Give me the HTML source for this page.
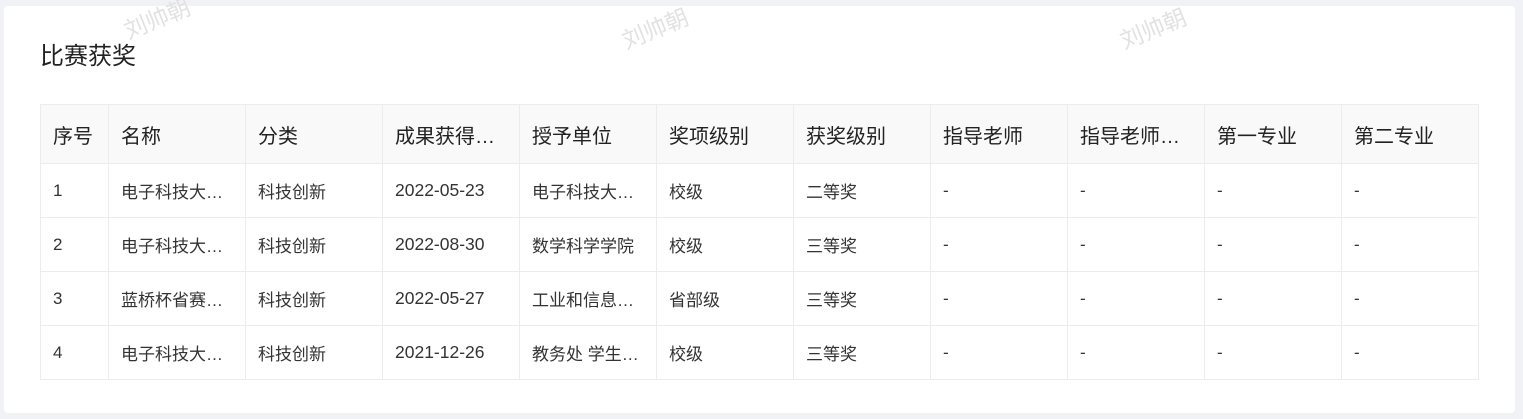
<!DOCTYPE html>
<html><head><meta charset="utf-8"><style>
body{margin:0;background:#f0f2f5;font-family:"Liberation Sans","Noto Sans CJK SC",sans-serif;width:1523px;height:419px;overflow:hidden;position:relative}
.card{position:absolute;left:4px;top:6px;width:1511px;height:407px;background:#fff;border-radius:4px}
h1{position:absolute;left:36px;top:30px;margin:0;font-size:24px;font-weight:normal;color:#222}
table{position:absolute;left:36px;top:98px;border-collapse:collapse;table-layout:fixed;width:1439px}
td,th{border:1px solid #ececec;padding:0 12px;white-space:nowrap;overflow:hidden;text-overflow:ellipsis;text-align:left;color:#333}
th{background:#f9f9f9;height:58px;font-size:20px;font-weight:normal;color:#222}
td{height:53px;font-size:17px}
td.d{font-size:17.5px}
.wm{position:absolute;color:#e2e2e2;font-size:23px;transform:rotate(-22deg);z-index:2}
</style></head><body>
<div class="card">
<h1>比赛获奖</h1>
<table>
<colgroup><col style="width:68px"><col span="10" style="width:137px"></colgroup>
<tr><th>序号</th><th>名称</th><th>分类</th><th>成果获得时间</th><th>授予单位</th><th>奖项级别</th><th>获奖级别</th><th>指导老师</th><th>指导老师（校外）</th><th>第一专业</th><th>第二专业</th></tr>
<tr><td>1</td><td>电子科技大学竞赛</td><td>科技创新</td><td class="d">2022-05-23</td><td>电子科技大学教务处</td><td>校级</td><td>二等奖</td><td>-</td><td>-</td><td>-</td><td>-</td></tr>
<tr><td>2</td><td>电子科技大学竞赛</td><td>科技创新</td><td class="d">2022-08-30</td><td>数学科学学院</td><td>校级</td><td>三等奖</td><td>-</td><td>-</td><td>-</td><td>-</td></tr>
<tr><td>3</td><td>蓝桥杯省赛竞赛</td><td>科技创新</td><td class="d">2022-05-27</td><td>工业和信息化部</td><td>省部级</td><td>三等奖</td><td>-</td><td>-</td><td>-</td><td>-</td></tr>
<tr><td>4</td><td>电子科技大学竞赛</td><td>科技创新</td><td class="d">2021-12-26</td><td>教务处 学生…</td><td>校级</td><td>三等奖</td><td>-</td><td>-</td><td>-</td><td>-</td></tr>
</table>
</div>
<div class="wm" style="left:122px;top:0px">刘帅朝</div>
<div class="wm" style="left:620px;top:10px">刘帅朝</div>
<div class="wm" style="left:1118px;top:10px">刘帅朝</div>
</body></html>
